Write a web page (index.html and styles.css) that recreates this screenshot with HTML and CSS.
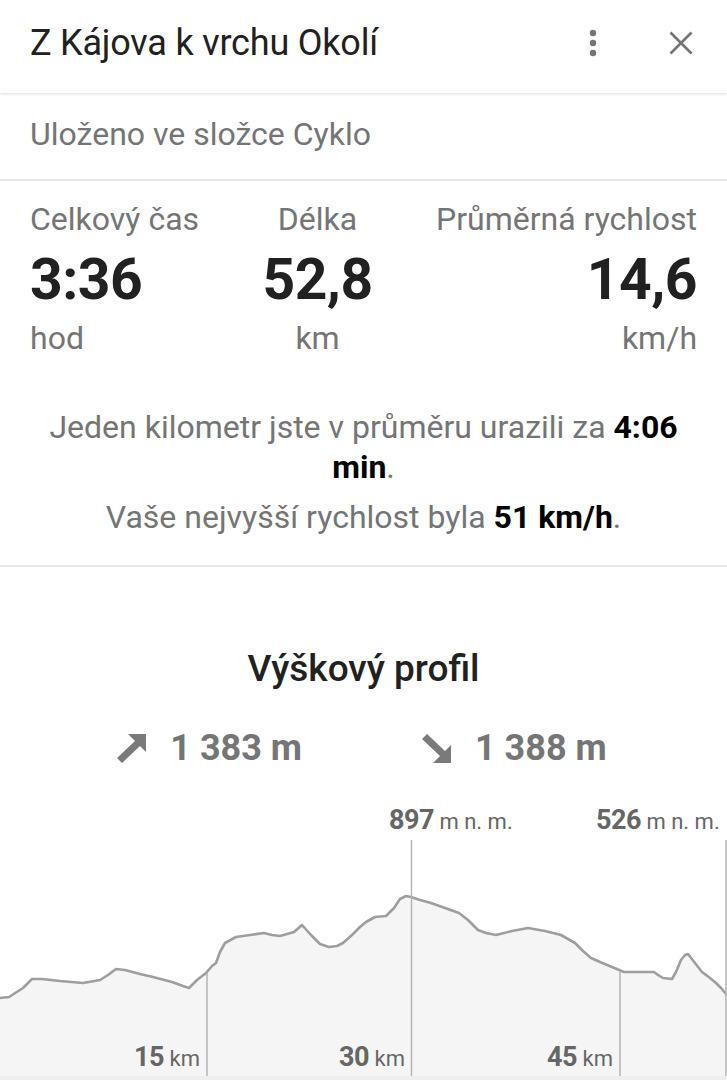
FILE: index.html
```html
<!DOCTYPE html>
<html lang="cs">
<head>
    <meta charset="utf-8">
    <title>Z Kájova k vrchu Okolí</title>
    <link rel="stylesheet" href="styles.css">
</head>
<body>
    <header class="topbar">
        <h1 class="title">Z Kájova k vrchu Okolí</h1>
        <button class="icon-btn" aria-label="Další možnosti">
            <svg width="24" height="28" viewBox="0 0 24 28">
                <circle cx="12" cy="4" r="3.2"/>
                <circle cx="12" cy="14" r="3.2"/>
                <circle cx="12" cy="24" r="3.2"/>
            </svg>
        </button>
        <button class="icon-btn close" aria-label="Zavřít">
            <svg width="24" height="24" viewBox="0 0 24 24">
                <path d="M1.5 1.5 L22.5 22.5 M22.5 1.5 L1.5 22.5"/>
            </svg>
        </button>
    </header>

    <main>
        <section class="folder">Uloženo ve složce Cyklo</section>

        <section class="summary">
            <div class="stats">
                <div class="stat stat-left">
                    <div class="stat-label">Celkový čas</div>
                    <div class="stat-value">3:36</div>
                    <div class="stat-unit">hod</div>
                </div>
                <div class="stat stat-center">
                    <div class="stat-label">Délka</div>
                    <div class="stat-value">52,8</div>
                    <div class="stat-unit">km</div>
                </div>
                <div class="stat stat-right">
                    <div class="stat-label">Průměrná rychlost</div>
                    <div class="stat-value">14,6</div>
                    <div class="stat-unit">km/h</div>
                </div>
            </div>
            <p class="note">Jeden kilometr jste v průměru urazili za <b>4:06</b> <b>min</b>.</p>
            <p class="note">Vaše nejvyšší rychlost byla <b>51 km/h</b>.</p>
        </section>

        <section class="elevation">
            <h2 class="elevation-title">Výškový profil</h2>
            <div class="climb">
                <span class="climb-item">
                    <svg width="30" height="29" viewBox="0 0 30 29">
                        <path d="M30 0 L30 18 L24 12 L6 29 L1 24 L19 7 L12 0 Z"/>
                    </svg>
                    1 383 m
                </span>
                <span class="climb-item">
                    <svg width="30" height="29" viewBox="0 0 30 29">
                        <path d="M30 29 L30 11 L24 17 L6 0 L1 5 L19 22 L12 29 Z"/>
                    </svg>
                    1 388 m
                </span>
            </div>

            <div class="chart">
                <svg class="chart-svg" width="727" height="276" viewBox="0 800 727 276">
                    <path class="area" d="M0 998 L9 997 L23 988 L32 979 L42 979 L60 981 L83 983 L100 980 L108 975 L116 969 L125 970 L140 974 L153 977 L172 982 L183 986 L189 988 L197 980 L206 973 L212 966 L216 963 L220 952 L225 943 L236 937 L250 935 L264 933 L272 935 L280 936 L294 932 L302 925 L311 935 L320 944 L329 947 L337 946 L343 943 L352 935 L360 927 L366 922 L375 917 L386 916 L394 908 L400 899 L406 896 L411 897 L420 900 L431 903 L445 908 L459 913 L468 920 L478 930 L486 933 L496 935 L512 931 L528 928 L545 931 L561 935 L568 939 L575 943 L583 951 L591 958 L600 962 L612 967 L624 972 L640 972 L654 972 L658 975 L663 978 L672 979 L676 972 L681 960 L685 955 L688 954 L695 963 L702 972 L710 978 L716 983 L721 988 L727 995 L727 1076 L0 1076 Z"/>
                    <path class="line" d="M0 998 L9 997 L23 988 L32 979 L42 979 L60 981 L83 983 L100 980 L108 975 L116 969 L125 970 L140 974 L153 977 L172 982 L183 986 L189 988 L197 980 L206 973 L212 966 L216 963 L220 952 L225 943 L236 937 L250 935 L264 933 L272 935 L280 936 L294 932 L302 925 L311 935 L320 944 L329 947 L337 946 L343 943 L352 935 L360 927 L366 922 L375 917 L386 916 L394 908 L400 899 L406 896 L411 897 L420 900 L431 903 L445 908 L459 913 L468 920 L478 930 L486 933 L496 935 L512 931 L528 928 L545 931 L561 935 L568 939 L575 943 L583 951 L591 958 L600 962 L612 967 L624 972 L640 972 L654 972 L658 975 L663 978 L672 979 L676 972 L681 960 L685 955 L688 954 L695 963 L702 972 L710 978 L716 983 L721 988 L727 995"/>
                    <line class="marker" x1="207" y1="973" x2="207" y2="1076"/>
                    <line class="marker" x1="411.5" y1="840" x2="411.5" y2="1076"/>
                    <line class="marker" x1="620" y1="972" x2="620" y2="1076"/>
                    <line class="marker" x1="726" y1="840" x2="726" y2="1076"/>
                </svg>

                <div class="chart-label" style="left: 389px; top: 6px;"><b>897</b> m n. m.</div>
                <div class="chart-label" style="left: 596px; top: 6px;"><b>526</b> m n. m.</div>
                <div class="chart-label km" style="right: 527px;"><b>15</b> km</div>
                <div class="chart-label km" style="right: 322px;"><b>30</b> km</div>
                <div class="chart-label km" style="right: 114px;"><b>45</b> km</div>
            </div>
        </section>
    </main>
</body>
</html>
```

FILE: styles.css
```css
:root {
    --text-dark: #212121;
    --text-gray: #757575;
    --chart-gray: #666666;
    --divider: #e6e6e6;
}

* {
    box-sizing: border-box;
    margin: 0;
    padding: 0;
}

body {
    font-family: Roboto, 'Noto Sans', Arial, sans-serif;
    background-color: #ffffff;
    color: var(--text-dark);
    width: 727px;
    overflow: hidden;
}

/* top bar */
.topbar {
    height: 93px;
    display: flex;
    align-items: center;
    padding: 0 30px;
    background-color: #ffffff;
    box-shadow: 0 1px 3px rgba(0,0,0,0.14);
    position: relative;
    z-index: 1;
}

.title {
    flex: 1;
    font-size: 36px;
    font-weight: 400;
    color: var(--text-dark);
    letter-spacing: -0.2px;
    margin-top: -8px;
}

.icon-btn {
    border: none;
    background: none;
    display: flex;
    align-items: center;
    justify-content: center;
    margin-top: -8px;
    fill: var(--text-gray);
    stroke: var(--text-gray);
}

.icon-btn svg circle {
    stroke: none;
}

.icon-btn.close {
    margin-left: 64px;
    margin-right: 4px;
}

.icon-btn.close path {
    stroke-width: 2.6;
    fill: none;
}

/* folder */
.folder {
    height: 88px;
    display: flex;
    align-items: center;
    padding: 0 30px 4px;
    font-size: 32px;
    color: var(--text-gray);
    border-bottom: 2px solid var(--divider);
}

/* summary */
.summary {
    padding: 13px 30px 0;
    height: 386px;
    border-bottom: 2px solid var(--divider);
}

.stats {
    display: flex;
    justify-content: space-between;
}

.stat-left { text-align: left; }
.stat-center { text-align: center; }
.stat-right { text-align: right; }

.stat-label {
    font-size: 32px;
    color: var(--text-gray);
    line-height: 50px;
}

.stat-value {
    font-size: 57px;
    font-weight: 700;
    color: var(--text-dark);
    line-height: 72px;
    letter-spacing: -0.5px;
}

.stat-unit {
    font-size: 32px;
    color: var(--text-gray);
    line-height: 44px;
}

.note {
    font-size: 32px;
    line-height: 40px;
    color: var(--text-gray);
    text-align: center;
    padding: 0 4px;
}

.stats + .note {
    margin-top: 47px;
}

.note + .note {
    margin-top: 10px;
}

.note b {
    color: #000000;
    font-weight: 700;
}

/* elevation */
.elevation {
    padding-top: 80px;
}

.elevation-title {
    text-align: center;
    font-size: 37px;
    font-weight: 500;
    color: var(--text-dark);
    line-height: 44px;
}

.climb {
    display: flex;
    justify-content: center;
    gap: 119px;
    margin-top: 37px;
    padding-right: 4px;
}

.climb-item {
    display: flex;
    align-items: center;
    gap: 24px;
    font-size: 36px;
    font-weight: 700;
    color: var(--text-gray);
    line-height: 40px;
}

.climb-item svg {
    fill: #7a7a7a;
}

.chart {
    position: relative;
    height: 280px;
    margin-top: 32px;
    border-bottom: 4px solid #eeeeee;
}

.chart-svg {
    display: block;
}

.chart-svg .area {
    fill: #f5f5f5;
}

.chart-svg .line {
    fill: none;
    stroke: #9e9e9e;
    stroke-width: 2.6;
    stroke-linejoin: round;
    stroke-linecap: round;
}

.chart-svg .marker {
    stroke: #b5b5b5;
    stroke-width: 1.5;
}

.chart-label {
    position: absolute;
    font-size: 22px;
    color: var(--chart-gray);
    line-height: 28px;
    white-space: nowrap;
}

.chart-label b {
    font-size: 27px;
    font-weight: 700;
    letter-spacing: -0.5px;
}

.chart-label.km {
    top: 243px;
}
```
